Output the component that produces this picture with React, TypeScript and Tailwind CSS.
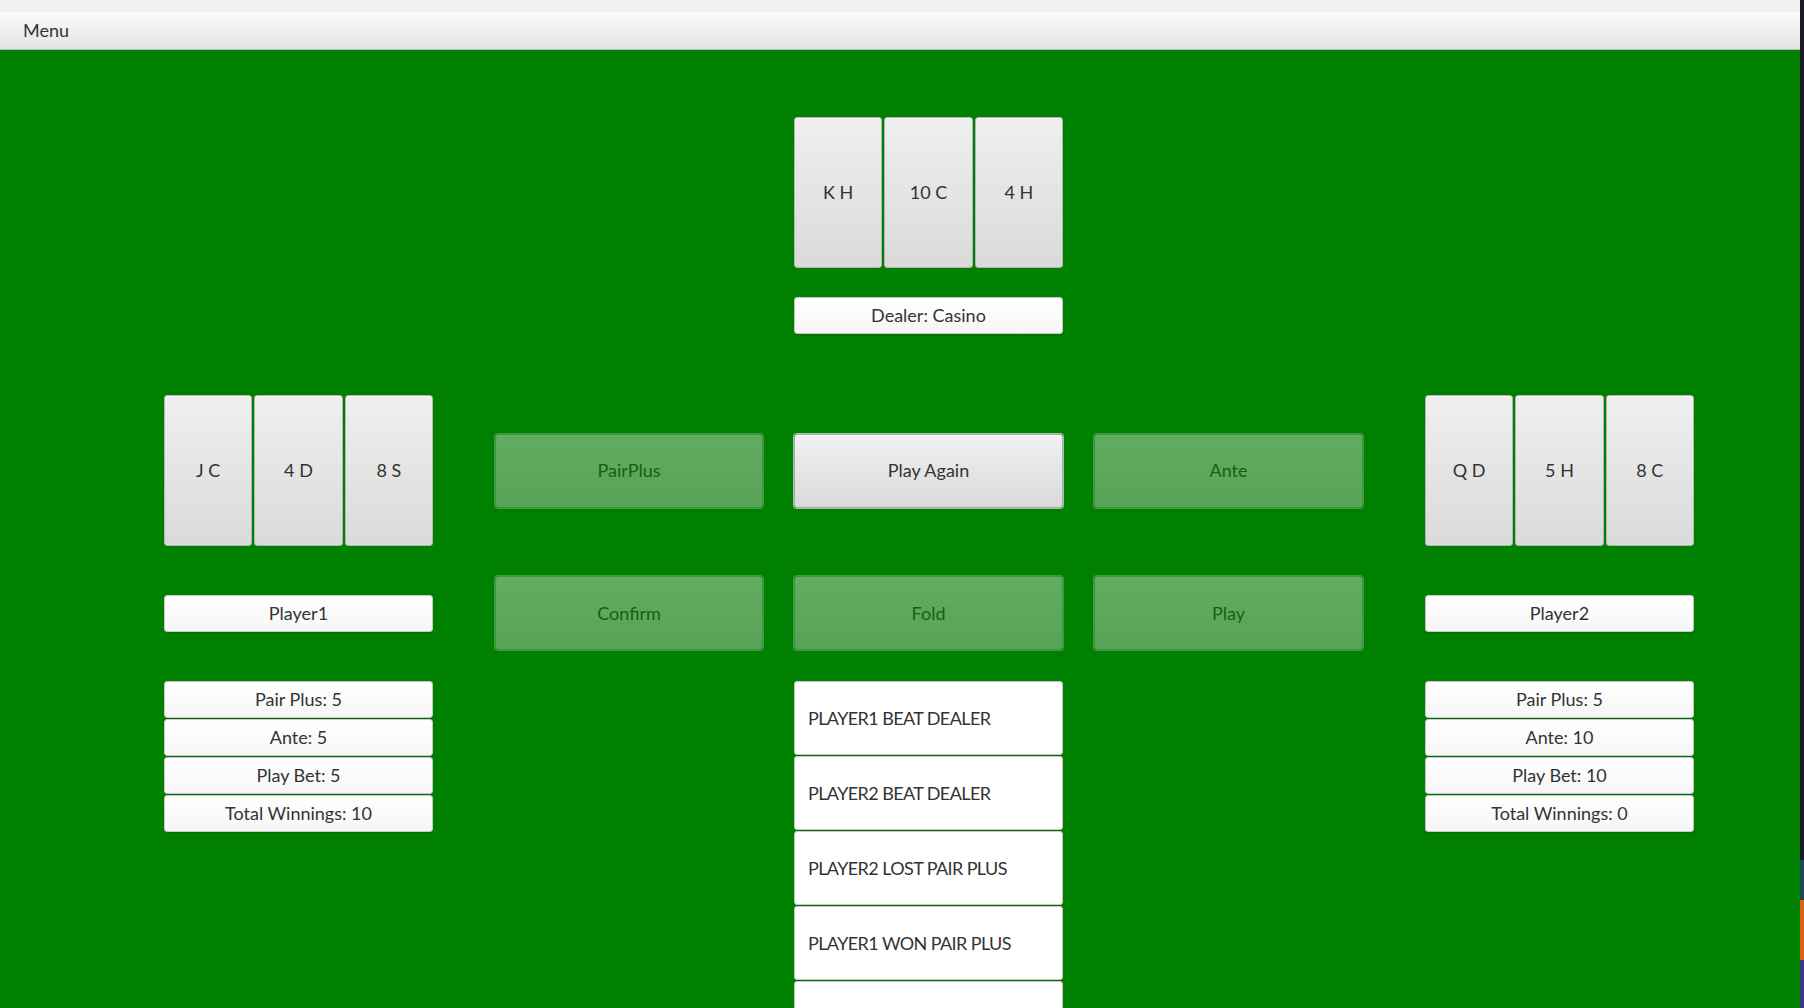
const font = { fontFamily: "Lato, 'Open Sans', sans-serif" };

const cardCls =
  "flex flex-1 items-center justify-center rounded-[3px] border border-[#b5b5b5] bg-gradient-to-b from-[#efefef] to-[#dadada] text-[18px] text-[#333] shadow-[inset_0_1px_0_#fafafa]";

const labelCls =
  "flex h-[37px] w-[269px] items-center justify-center rounded-[3px] border border-[#c9c9c9] bg-gradient-to-b from-white to-[#f6f6f6] text-[18px] text-[#333] shadow-[0_1px_1px_rgba(0,0,0,0.15)]";

const btnCls =
  "flex h-[74px] w-full items-center justify-center rounded-[3px] border border-[#a9a9a9] bg-gradient-to-b from-[#f1f1f1] to-[#d9d9d9] text-[18px] text-[#333] shadow-[0_0_0_1px_rgba(255,255,255,0.6),inset_0_1px_0_#fbfbfb]";

function Cards({ cards }: { cards: string[] }) {
  return (
    <div className="flex h-[151px] w-[269px] gap-[2px]">
      {cards.map((c) => (
        <div key={c} className={cardCls}>
          {c}
        </div>
      ))}
    </div>
  );
}

function Btn({ label, disabled }: { label: string; disabled?: boolean }) {
  return (
    <button type="button" className={btnCls + (disabled ? " opacity-40" : "")}>
      {label}
    </button>
  );
}

function Stats({ rows }: { rows: string[] }) {
  return (
    <div className="flex w-[269px] flex-col gap-[1px]">
      {rows.map((r) => (
        <div key={r} className={labelCls}>
          {r}
        </div>
      ))}
    </div>
  );
}

const row = "grid grid-cols-[300px_268px_269px_269px_300px] gap-x-[31px]";

export default function App() {
  const results = [
    "PLAYER1 BEAT DEALER",
    "PLAYER2 BEAT DEALER",
    "PLAYER2 LOST PAIR PLUS",
    "PLAYER1 WON PAIR PLUS",
    "",
  ];
  return (
    <div className="flex h-[1008px] w-[1804px] overflow-hidden bg-[#1c1c28]" style={font}>
      <div className="flex w-[1800px] flex-col">
        <div className="h-[12px] shrink-0 bg-[#f0f0f0]" />
        <div className="flex h-[38px] shrink-0 items-center border-b border-[#b9b9b9] bg-gradient-to-b from-[#fbfbfb] to-[#e4e4e4] pl-[23px] text-[18px] text-[#333]">
          Menu
        </div>
        <div className="min-h-0 flex-1 overflow-hidden bg-[#008000] pl-[164px] pt-[67px]">
          <div className={row}>
            <div />
            <div />
            <Cards cards={["K H", "10 C", "4 H"]} />
          </div>
          <div className={row + " mt-[29px]"}>
            <div />
            <div />
            <div className={labelCls}>Dealer: Casino</div>
          </div>
          <div className={row + " mt-[61px] items-center"}>
            <Cards cards={["J C", "4 D", "8 S"]} />
            <Btn label="PairPlus" disabled />
            <Btn label="Play Again" />
            <Btn label="Ante" disabled />
            <div className="justify-self-end">
              <Cards cards={["Q D", "5 H", "8 C"]} />
            </div>
          </div>
          <div className={row + " mt-[30px] items-center"}>
            <div className={labelCls}>Player1</div>
            <Btn label="Confirm" disabled />
            <Btn label="Fold" disabled />
            <Btn label="Play" disabled />
            <div className={labelCls + " justify-self-end"}>Player2</div>
          </div>
          <div className={row + " mt-[31px] items-start"}>
            <Stats rows={["Pair Plus: 5", "Ante: 5", "Play Bet: 5", "Total Winnings: 10"]} />
            <div />
            <div className="flex flex-col gap-[1px]">
              {results.map((r, i) => (
                <div
                  key={i}
                  className="flex h-[74px] shrink-0 items-center rounded-[3px] border border-[#c9c9c9] bg-white pl-[13px] text-[18px] tracking-[-0.6px] text-[#333] shadow-[0_1px_1px_rgba(0,0,0,0.15)]"
                >
                  {r}
                </div>
              ))}
            </div>
            <div />
            <div className="justify-self-end">
              <Stats rows={["Pair Plus: 5", "Ante: 10", "Play Bet: 10", "Total Winnings: 0"]} />
            </div>
          </div>
        </div>
      </div>
      <div className="flex w-[4px] flex-col">
        <div className="h-[860px] bg-[#1c1c28]" />
        <div className="h-[40px] bg-[#1a4a5a]" />
        <div className="h-[60px] bg-[#d9660f]" />
        <div className="flex-1 bg-[#3a3a7a]" />
      </div>
    </div>
  );
}
